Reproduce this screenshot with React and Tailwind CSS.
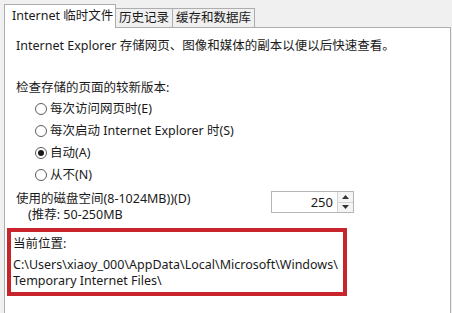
import React from "react";

const font = { fontFamily: '"Noto Sans", "Noto Sans CJK SC", sans-serif' };

function Radio({ checked, label }) {
  return (
    <div className="flex items-center h-[22px]">
      <span className="w-[12px] h-[12px] rounded-full border border-[#5c5c5c] bg-white flex items-center justify-center">
        {checked && <span className="w-[6px] h-[6px] rounded-full bg-[#1a1a1a]" />}
      </span>
      <span className="ml-[3px]">{label}</span>
    </div>
  );
}

export default function App() {
  return (
    <div
      className="w-[452px] h-[313px] bg-[#f0f0f0] overflow-hidden text-[12.5px] leading-[16px] text-[#1a1a1a]"
      style={font}
    >
      <div className="flex items-end h-[27px] pl-[4px]">
        <div className="relative z-10 w-[112px] bg-white border border-b-0 border-[#adadad] pl-[7px] pt-[3px] mb-[-1px] h-[24px]">
          Internet 临时文件
        </div>
        <div className="h-[19px] bg-[#f0f0f0] border border-b-0 border-l-0 border-[#adadad] px-[3px] pt-[1px]">
          历史记录
        </div>
        <div className="h-[19px] bg-[#f0f0f0] border border-b-0 border-l-0 border-[#adadad] px-[3px] pt-[1px]">
          缓存和数据库
        </div>
      </div>
      <div className="ml-[4px] w-[447px] h-[300px] bg-white border border-[#adadad] pt-[10px]">
        <div className="pl-[11px]">Internet Explorer 存储网页、图像和媒体的副本以便以后快速查看。</div>
        <div className="pl-[11px] mt-[26px]">检查存储的页面的较新版本:</div>
        <div className="pl-[30px] mt-[2px]">
          <Radio label="每次访问网页时(E)" />
          <Radio label="每次启动 Internet Explorer 时(S)" />
          <Radio checked label="自动(A)" />
          <Radio label="从不(N)" />
        </div>
        <div className="flex mt-[4px]">
          <div className="w-[266px] pl-[11px] pt-[1px] leading-[16px]">
            <div>使用的磁盘空间(8-1024MB))(D)</div>
            <div className="pl-[12px]">(推荐: 50-250MB</div>
          </div>
          <div className="mt-[1px] flex w-[83px] h-[22px] border border-[#b5b5b5] bg-white">
            <div className="flex-1 text-right pr-[4px] pt-[2px] text-[13px]">250</div>
            <div className="w-[16px] flex flex-col border-l border-[#d4d4d4]">
              <div className="flex-1 flex items-center justify-center bg-[#f4f4f4] border-b border-[#d4d4d4]">
                <svg width="7" height="4" viewBox="0 0 7 4"><path d="M3.5 0L7 4H0z" fill="#333" /></svg>
              </div>
              <div className="flex-1 flex items-center justify-center bg-[#f4f4f4]">
                <svg width="7" height="4" viewBox="0 0 7 4"><path d="M0 0H7L3.5 4z" fill="#333" /></svg>
              </div>
            </div>
          </div>
        </div>
        <div className="ml-[2px] mt-[5px] w-[340px] h-[68px] border-[4px] border-[#c8242c] pl-[2px] pt-[4px]">
          <div>当前位置:</div>
          <div className="mt-[5px] leading-[16px]">
            C:\Users\xiaoy_000\AppData\Local\Microsoft\Windows\
            <br />
            Temporary Internet Files\
          </div>
        </div>
      </div>
    </div>
  );
}
